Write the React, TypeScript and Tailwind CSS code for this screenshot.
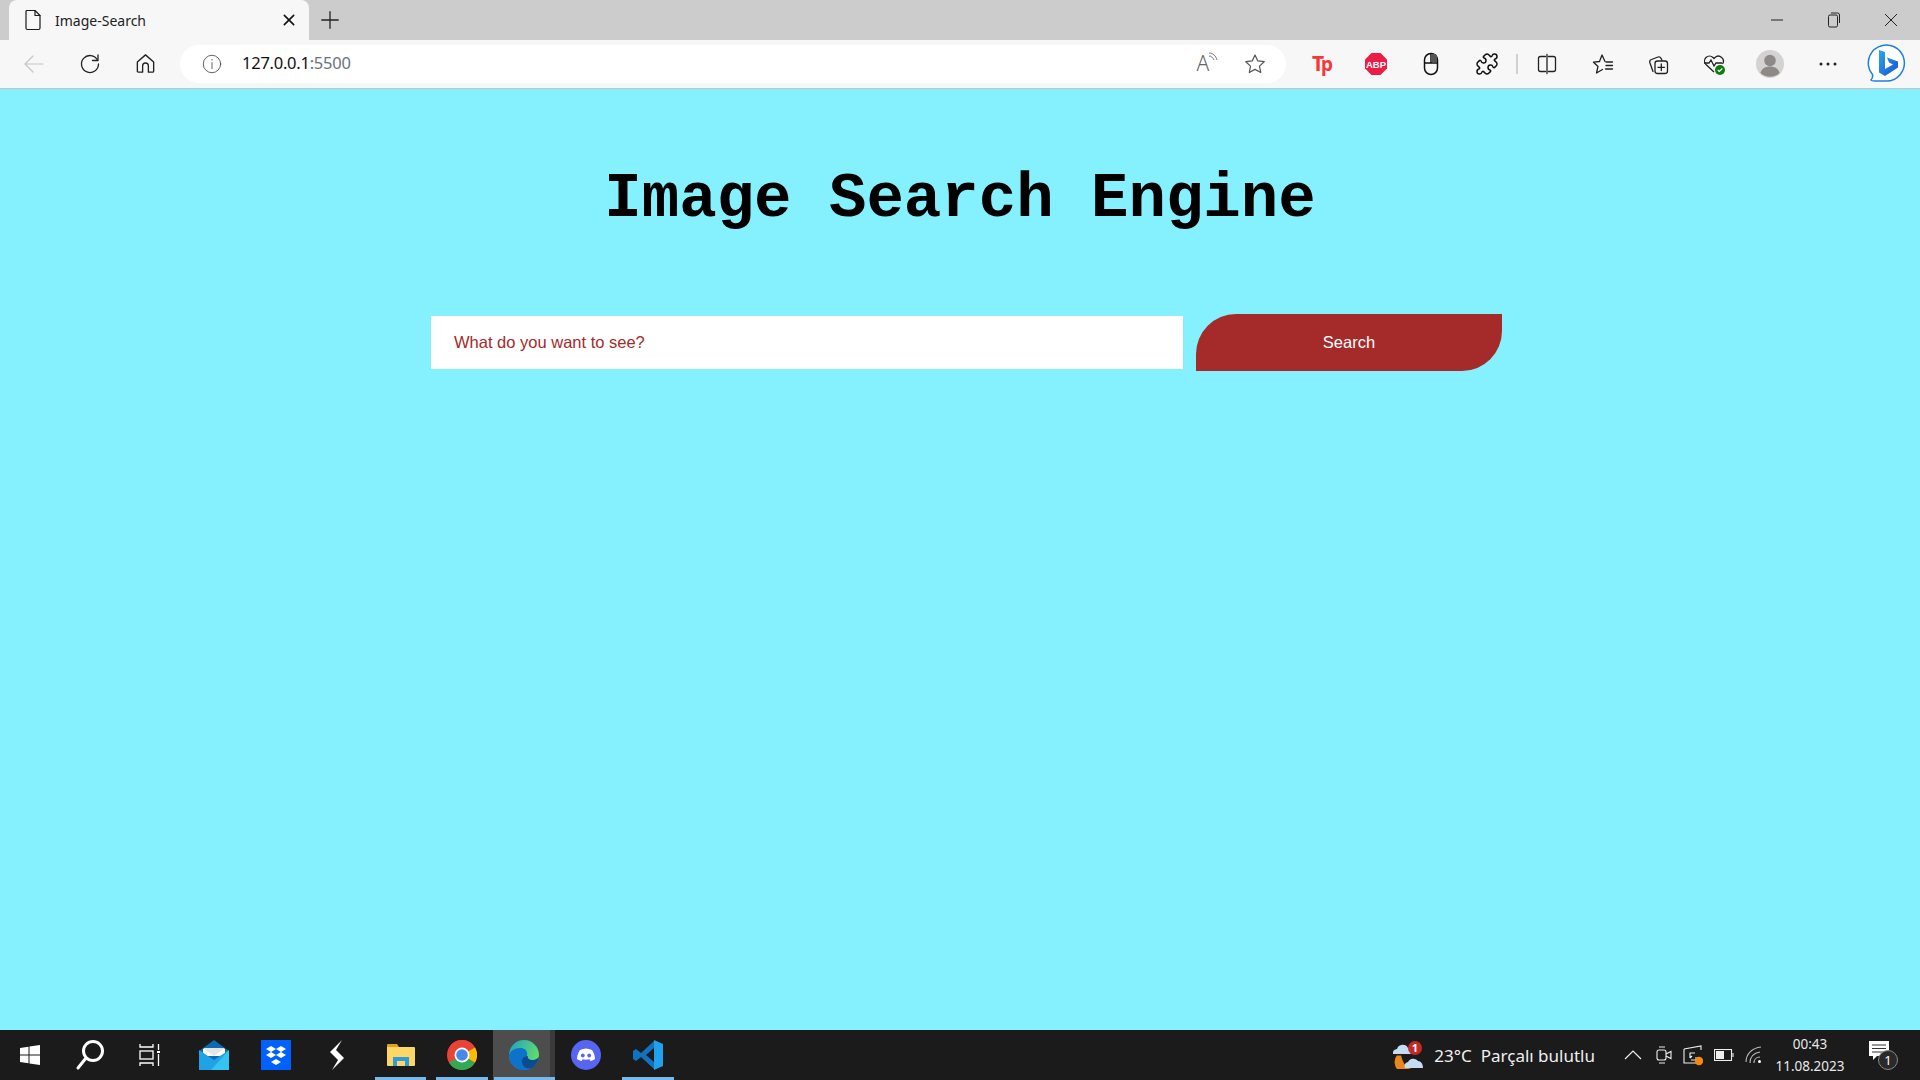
import { ReactNode } from "react"
import { Puzzle } from "lucide-react"

const ui = { fontFamily: '"Noto Sans", "Open Sans", sans-serif' }

function Cell({ w, children, className = "" }: { w: string; children: ReactNode; className?: string }) {
  return <div className={`flex h-full shrink-0 items-center justify-center ${w} ${className}`}>{children}</div>
}

function Line({ size, children, color = "#222", sw = 1.4 }: { size: number; children: ReactNode; color?: string; sw?: number }) {
  return (
    <svg width={size} height={size} viewBox="0 0 24 24" fill="none" stroke={color} strokeWidth={sw} strokeLinecap="round" strokeLinejoin="round">
      {children}
    </svg>
  )
}

function TitleBar() {
  return (
    <div className="flex h-10 items-end bg-[#cccccc] pl-[9px]" style={ui}>
      <div className="flex h-10 w-[300px] items-center rounded-t-lg bg-[#f7f7f7] pl-3 pr-3">
        <Line size={24} color="#1a1a1a" sw={1.2}>
          <path d="M6 2.500h8l5 5V20a1.500 1.500 0 0 1-1.500 1.500h-11A1.500 1.500 0 0 1 5 20V3.500a1 1 0 0 1 1-1z" />
          <path d="M14 2.500V7.500h5" />
        </Line>
        <span className="ml-[10px] flex-1 text-[14px] text-[#222]">Image-Search</span>
        <Line size={16} color="#111" sw={2.4}>
          <path d="M5 5l14 14M19 5L5 19" />
        </Line>
      </div>
      <Cell w="w-[42px]" className="!h-10">
        <Line size={22} color="#222">
          <path d="M12 3v18M3 12h18" />
        </Line>
      </Cell>
      <div className="flex-1" />
      <Cell w="w-[57px]" className="!h-10">
        <svg width="14" height="14" viewBox="0 0 14 14"><path d="M1 7h12" stroke="#222" strokeWidth="1" /></svg>
      </Cell>
      <Cell w="w-[57px]" className="!h-10">
        <svg width="14" height="16" viewBox="0 0 14 16" fill="none" stroke="#222" strokeWidth="1">
          <rect x="1.500" y="3" width="9" height="12" rx="1.500" />
          <path d="M4 1h6.500a2 2 0 0 1 2 2v8" />
        </svg>
      </Cell>
      <Cell w="w-[57px]" className="mr-[1px] !h-10">
        <svg width="14" height="14" viewBox="0 0 14 14"><path d="M1 1l12 12M13 1L1 13" stroke="#222" strokeWidth="1" /></svg>
      </Cell>
    </div>
  )
}

function Toolbar() {
  return (
    <div className="flex h-[49px] items-center border-b border-[#c4c4c4] bg-[#f7f7f7] pb-[1px] pl-[6px]" style={ui}>
      <Cell w="w-[56px]">
        <Line size={24} color="#c6c6c6" sw={1.2}>
          <path d="M21 12H3M11 4l-8 8 8 8" />
        </Line>
      </Cell>
      <Cell w="w-[55px]">
        <Line size={24} color="#222" sw={1.3}>
          <path d="M19.500 8A8.500 8.500 0 1 0 20.500 12" />
          <path d="M20 3v5.500h-5.500" />
        </Line>
      </Cell>
      <Cell w="w-[56px]">
        <Line size={23} color="#222" sw={1.4}>
          <path d="M3.500 10.500 12 3l8.500 7.500V20a1 1 0 0 1-1 1H15v-6.500a3 3 0 0 0-6 0V21H4.500a1 1 0 0 1-1-1z" />
        </Line>
      </Cell>
      <div className="ml-[7px] flex h-[38px] w-[1106px] shrink-0 items-center rounded-[19px] bg-white">
        <div className="ml-[21px]">
          <Line size={22} color="#555" sw={1}>
            <circle cx="12" cy="12" r="9.500" />
            <path d="M12 10.500V17M12 7v.8" />
          </Line>
        </div>
        <span className="ml-[19px] text-[16.5px] tracking-[-0.25px] text-[#111]">
          127.0.0.1<span className="text-[#6a7280]">:5500</span>
        </span>
        <div className="flex-1" />
        <span className="relative mr-[28px] flex h-6 w-6 items-center justify-center text-[21px] font-light text-[#666]">
          A
          <svg className="absolute right-[-3px] top-[0px]" width="10" height="10" viewBox="0 0 10 10" fill="none" stroke="#666" strokeWidth="0.9">
            <path d="M1 1c4 0 7 3 8 7M1 4c2 0 4 1.500 5 4" />
          </svg>
        </span>
        <div className="mr-[19px]">
          <Line size={24} color="#555" sw={1.2}>
            <path d="M12 3l2.800 5.900 6.400.8-4.700 4.400 1.200 6.400L12 17.400l-5.700 3.100 1.200-6.400L2.800 9.700l6.400-.8z" />
          </Line>
        </div>
      </div>
      <Cell w="w-[54px]" className="ml-[8px]">
        <span className="flex items-baseline text-[21px] font-bold leading-none tracking-[-3px] text-[#f5383c]" style={{ fontFamily: '"Noto Sans", sans-serif' }}>
          T<span className="text-[19px]">p</span>
        </span>
      </Cell>
      <Cell w="w-[55px]">
        <svg width="22" height="22" viewBox="0 0 22 22">
          <path d="M6.500 0h9L22 6.500v9L15.500 22h-9L0 15.500v-9z" fill="#ed1e45" />
          <text x="11" y="14.500" textAnchor="middle" fontSize="9.500" fontWeight="700" fill="#fff" fontFamily="Liberation Sans">ABP</text>
        </svg>
      </Cell>
      <Cell w="w-[56px]">
        <svg width="16" height="24" viewBox="0 0 16 24" fill="none" stroke="#111" strokeWidth="1.500">
          <rect x="1.500" y="1.500" width="13" height="21" rx="6.500" />
          <path d="M1.500 11h13M8 1.500V11" />
          <path d="M8 2h3.500a3 3 0 0 1 2.500 3.500V10H8z" fill="#555" stroke="none" />
        </svg>
      </Cell>
      <Cell w="w-[56px]">
        <Puzzle size={24} strokeWidth={1.5} color="#111" />
      </Cell>
      <div className="ml-[1px] h-[20px] w-[2px] shrink-0 bg-[#d0d0d0]" />
      <Cell w="w-[57px]">
        <Line size={24} color="#222" sw={1.300}>
          <path d="M10.500 4.500H5.500a2 2 0 0 0-2 2v11a2 2 0 0 0 2 2h5M13.500 4.500h5a2 2 0 0 1 2 2v11a2 2 0 0 1-2 2h-5M12 2.500v19" />
        </Line>
      </Cell>
      <Cell w="w-[55px]">
        <Line size={24} color="#222" sw={1.300}>
          <path d="M14 9.500 11 3 8.500 9.500 2.500 10.200l4.500 4.300-1.500 6.500 6-3.500" />
          <path d="M15 10h6.500M15 13.500h6.500M14.500 17h7" />
        </Line>
      </Cell>
      <Cell w="w-[56px]">
        <Line size={24} color="#222" sw={1.300}>
          <path d="M7 19.500 3.800 10.500A2.500 2.500 0 0 1 5.500 7.500L12 5a2.500 2.500 0 0 1 3 1.300l1 2" />
          <rect x="9" y="9" width="12.500" height="12.500" rx="2.500" />
          <path d="M15.300 12v6.500M12 15.300h6.500" />
        </Line>
      </Cell>
      <Cell w="w-[55px]">
        <svg width="24" height="24" viewBox="0 0 24 24" fill="none">
          <path d="M12 20 4 12.500a5 5 0 0 1 0-7 5 5 0 0 1 7 0l1 1 1-1a5 5 0 0 1 7.500 6.500" stroke="#222" strokeWidth="1.300" />
          <path d="M2 11h5l2-3 3 6 2-3h6" stroke="#222" strokeWidth="1.300" />
          <circle cx="18" cy="18" r="5" fill="#107c10" />
          <path d="M15.800 18l1.500 1.500 3-3" stroke="#fff" strokeWidth="1.200" />
        </svg>
      </Cell>
      <Cell w="w-[58px]">
        <svg width="28" height="28" viewBox="0 0 28 28">
          <circle cx="14" cy="14" r="14" fill="#d5d3d1" />
          <circle cx="14" cy="10.500" r="5.800" fill="#8c8987" />
          <path d="M4.500 23c1-4.500 5-6.500 9.500-6.500s8.500 2 9.500 6.500a14 14 0 0 1-19 0z" fill="#8c8987" />
        </svg>
      </Cell>
      <Cell w="w-[57px]">
        <svg width="18" height="4" viewBox="0 0 18 4" fill="#222">
          <circle cx="2" cy="2" r="1.500" />
          <circle cx="9" cy="2" r="1.500" />
          <circle cx="16" cy="2" r="1.500" />
        </svg>
      </Cell>
      <Cell w="w-[60px]">
        <svg width="40" height="40" viewBox="0 0 40 40" fill="none">
          <defs>
            <linearGradient id="bing" x1="0" y1="0" x2="1" y2="1">
              <stop offset="0" stopColor="#2aa8e8" />
              <stop offset="1" stopColor="#1a4fd8" />
            </linearGradient>
          </defs>
          <path d="M5 36c1.500-1.500 2-3 1.500-5.500A18 18 0 1 1 20 37H9c-2 0-3.500 0-4-1z" fill="#fff" stroke="#1b7fe0" strokeWidth="1.500" />
          <path d="M13 6l6 2v17l8-4.500-4-2-2-5 11 4v6L19 32l-6-3.500z" fill="url(#bing)" />
        </svg>
      </Cell>
    </div>
  )
}

function TaskIcon({ children, w = "w-[62px]", active, hover }: { children: ReactNode; w?: string; active?: boolean; hover?: boolean }) {
  return (
    <div className={`relative flex h-full shrink-0 items-center justify-center ${w} ${hover ? "bg-[#4d4d4d]" : ""}`}>
      {children}
      {active && <div className={`absolute bottom-0 h-[3px] bg-[#76b9ed] ${hover ? "left-[1px] right-0" : "left-[5px] right-[5px]"}`} />}
    </div>
  )
}

function Taskbar() {
  return (
    <div className="flex h-[50px] shrink-0 items-center bg-[#1b1b1b] text-white" style={ui}>
      <Cell w="w-[60px]">
        <svg width="20" height="20" viewBox="0 0 20 20" fill="#fff">
          <path d="M0 3l8.500-1.200v7.700H0zM9.500 1.600 20 0v9.500H9.500zM0 10.500h8.500v7.700L0 17zM9.500 10.500H20V20L9.500 18.400z" />
        </svg>
      </Cell>
      <Cell w="w-[60px]">
        <svg width="30" height="32" viewBox="0 0 30 32" fill="none" stroke="#fff" strokeWidth="3">
          <circle cx="18" cy="12" r="9.500" />
          <path d="M11 19 3 29" strokeLinecap="round" />
        </svg>
      </Cell>
      <Cell w="w-[60px]">
        <svg width="22" height="24" viewBox="0 0 22 24" fill="none" stroke="#fff" strokeWidth="1.300">
          <path d="M1 1v3h13V1M1 23v-3h13v3" />
          <rect x="1" y="8" width="13" height="8" />
          <path d="M19.500 1v6M19.500 11v12" />
          <rect x="18" y="8" width="3" height="2" fill="#fff" stroke="none" />
        </svg>
      </Cell>
      <TaskIcon w="w-[68px]">
        <svg width="30" height="30" viewBox="0 0 30 30">
          <path d="M0 11 15 0l15 11-15 11z" fill="#0b6cb5" />
          <path d="M4 9h22v7H4z" fill="#fff" />
          <path d="M4 8h22l-11 8z" fill="#e4e4e4" />
          <path d="M0 10l15 10 15-10v20H0z" fill="#1fa3e4" />
          <path d="M30 10v20H12z" fill="#35c4f2" />
        </svg>
      </TaskIcon>
      <TaskIcon w="w-[56px]">
        <svg width="30" height="30" viewBox="0 0 30 30">
          <rect width="30" height="30" fill="#0061fe" />
          <path d="M10 6l5 3-5 3-5-3zM20 6l5 3-5 3-5-3zM10 12l5 3-5 3-5-3zM20 12l5 3-5 3-5-3zM15 19l5 3-5 3-5-3z" fill="#fff" />
        </svg>
      </TaskIcon>
      <TaskIcon w="w-[66px]">
        <svg width="14" height="30" viewBox="0 0 14 30">
          <path d="M12 0 0 12l8 8-6 10 12-12-8-8z" fill="#fff" />
        </svg>
      </TaskIcon>
      <TaskIcon active w="w-[61px]">
        <svg width="28" height="24" viewBox="0 0 28 24">
          <path d="M0 2a1 1 0 0 1 1-1h9l2 3H0z" fill="#dfa21f" />
          <path d="M0 4h27a1 1 0 0 1 1 1v17a1 1 0 0 1-1 1H1a1 1 0 0 1-1-1z" fill="#fcd766" />
          <path d="M6 23v-9h16v9h-4v-5h-8v5z" fill="#2f9bd8" />
        </svg>
      </TaskIcon>
      <TaskIcon active>
        <svg width="30" height="30" viewBox="0 0 30 30">
          <circle cx="15" cy="15" r="15" fill="#ea4335" />
          <path d="M15 15 2 22.500A15 15 0 0 0 15 30a15 15 0 0 0 13-7.500z" fill="#34a853" />
          <path d="M15 0a15 15 0 0 1 13 22.500L15 15V7.500h13A15 15 0 0 0 15 0z" fill="#fbbc05" />
          <path d="M15 0a15 15 0 0 0-13 7.500L15 15l13-7.500A15 15 0 0 0 15 0z" fill="#ea4335" />
          <circle cx="15" cy="15" r="7.500" fill="#fff" />
          <circle cx="15" cy="15" r="5.800" fill="#4a87ec" />
        </svg>
      </TaskIcon>
      <TaskIcon active hover>
        <svg width="30" height="30" viewBox="0 0 30 30">
          <defs>
            <linearGradient id="edge" x1="0" y1="0" x2="1" y2="0.4">
              <stop offset="0" stopColor="#1fa0c8" />
              <stop offset="1" stopColor="#5fdc6c" />
            </linearGradient>
          </defs>
          <circle cx="15" cy="15" r="15" fill="url(#edge)" />
          <path d="M0 15c1-4 6-7 11-7s8 3 7 8c-3 1-5 4-4 8 1 2 5 5 9 4a15 15 0 0 1-23-13z" fill="#0d72c9" />
          <path d="M13 20c1-3 3-4 6-4-1 2 1 4 5 4 2 0 4-1 6-3a15 15 0 0 1-7 11c-6 2-11-3-10-8z" fill="#0d4a8f" />
        </svg>
        <div className="absolute bottom-0 right-0 top-0 w-[5px] bg-[#3a3a3a]" />
      </TaskIcon>
      <TaskIcon>
        <svg width="30" height="30" viewBox="0 0 30 30">
          <circle cx="15" cy="15" r="15" fill="#5865f2" />
          <path d="M9 10c4-2 8-2 12 0 2 3 3 6 3 9-1.500 1-3 1.800-4.500 2l-1-1.800c-2.300.6-4.700.6-7 0l-1 1.800C9 20.800 7.500 20 6 19c0-3 1-6 3-9z" fill="#fff" />
          <circle cx="11.800" cy="15.500" r="1.900" fill="#5865f2" />
          <circle cx="18.200" cy="15.500" r="1.900" fill="#5865f2" />
        </svg>
      </TaskIcon>
      <TaskIcon active>
        <svg width="30" height="30" viewBox="0 0 30 30">
          <path d="M21 1 8 13 3 9 0 11v8l3 2 5-4 13 12v-7l-8-7 8-7z" fill="#0f73c0" />
          <path d="M21 0l9 4v22l-9 4z" fill="#21a0ec" />
        </svg>
      </TaskIcon>
      <div className="flex-1" />
      <div className="mr-[11px] h-[28px] w-[30px] shrink-0">
        <svg width="30" height="28" viewBox="0 0 30 28">
          <path d="M4 14a11 11 0 0 0 18 14c-7 1-12-4-14-14z" fill="#e9871d" />
          <path d="M0 13a4 4 0 0 1 4-5 6 6 0 0 1 11-1 3 3 0 0 1 2 6z" fill="#c6dcf2" />
          <path d="M0 14h15" stroke="#1b1b1b" strokeWidth="1" />
          <path d="M12 27a4 4 0 0 1 3-6 6 6 0 0 1 10-1c3 0 5 3 5 7z" fill="#c6dcf2" />
          <circle cx="22" cy="7" r="7" fill="#c4292a" />
          <text x="22" y="11" textAnchor="middle" fontSize="11" fontWeight="700" fill="#fff" fontFamily="Noto Sans">1</text>
        </svg>
      </div>
      <span className="text-[17px] leading-none text-[#f0f0f0]">23°C</span>
      <span className="ml-[9px] text-[17px] leading-none text-[#f0f0f0]">Parçalı bulutlu</span>
      <Cell w="w-[26px]" className="ml-[25px]">
        <svg width="18" height="10" viewBox="0 0 18 10" fill="none" stroke="#eee" strokeWidth="1.200"><path d="M1 9l8-8 8 8" /></svg>
      </Cell>
      <Cell w="w-[20px]" className="ml-[8px]">
        <svg width="16" height="20" viewBox="0 0 16 20" fill="none" stroke="#eee" strokeWidth="1.100">
          <rect x="1" y="5" width="9" height="10" rx="2" />
          <path d="M10 9l5-2.500v7L10 11M3 2h6M3 18h6" />
        </svg>
      </Cell>
      <Cell w="w-[24px]" className="ml-[7px]">
        <svg width="20" height="22" viewBox="0 0 20 22" fill="none" stroke="#eee" strokeWidth="1.100">
          <path d="M1 5l17-3v4M1 5v14h12" />
          <path d="M12 9H7v5M7 14l2-2M8 16h5v-3" />
          <circle cx="16" cy="17" r="4.200" fill="#f7890c" stroke="none" />
        </svg>
      </Cell>
      <Cell w="w-[22px]" className="ml-[8px]">
        <svg width="20" height="12" viewBox="0 0 20 12" fill="none" stroke="#eee" strokeWidth="1.100">
          <rect x="0.500" y="0.500" width="17" height="11" />
          <rect x="2" y="2" width="8" height="8" fill="#eee" stroke="none" />
          <path d="M19 4v4" />
        </svg>
      </Cell>
      <Cell w="w-[22px]" className="ml-[8px]">
        <svg width="18" height="18" viewBox="0 0 18 18" fill="none" stroke="#bbb" strokeWidth="1.100">
          <path d="M1 16C1 8 7 2 16 1M5 17c0-6 4-10 10-11M9 17c0-3 2-6 6-6" />
          <circle cx="14.500" cy="15.500" r="1.500" fill="#fff" stroke="none" />
        </svg>
      </Cell>
      <div className="ml-[6px] flex w-[78px] shrink-0 flex-col items-center text-[13.5px] leading-[22px] text-[#e8e8e8]">
        <span>00:43</span>
        <span>11.08.2023</span>
      </div>
      <div className="relative ml-[20px] mr-[27px] h-[28px] w-[24px] shrink-0">
        <svg width="20" height="20" viewBox="0 0 20 20" fill="#fff" className="absolute left-0 top-0">
          <path d="M0 0h20v15H8l-4 4v-4H0z" />
          <path d="M3 4h14M3 7.500h14M3 11h14" stroke="#333" strokeWidth="1" />
        </svg>
        <div className="absolute left-[9px] top-[9px] flex h-[20px] w-[20px] items-center justify-center rounded-full border border-[#888] bg-[#2a2a2a] text-[13px] leading-none">1</div>
      </div>
    </div>
  )
}

export default function App() {
  return (
    <div className="flex h-screen flex-col overflow-hidden bg-[#85f1ff]">
      <TitleBar />
      <Toolbar />
      <main className="flex flex-1 flex-col items-center">
        <h1 className="mt-[74px] text-[62.4px] font-bold leading-[74px] text-black" style={{ fontFamily: '"Liberation Mono", monospace' }}>
          Image Search Engine
        </h1>
        <div className="mt-[77px] flex items-center pl-[13px]" style={{ fontFamily: '"Liberation Sans", Arial, sans-serif' }}>
          <div className="flex h-[53px] w-[752px] items-center bg-white pl-[23px] text-[16.5px] text-[#a52a2a]">What do you want to see?</div>
          <div className="ml-[13px] flex h-[57px] w-[306px] items-center justify-center rounded-bl-none rounded-br-[40px] rounded-tl-[40px] rounded-tr-none bg-[#a52a2a] text-[16.5px] text-white">
            Search
          </div>
        </div>
      </main>
      <Taskbar />
    </div>
  )
}
